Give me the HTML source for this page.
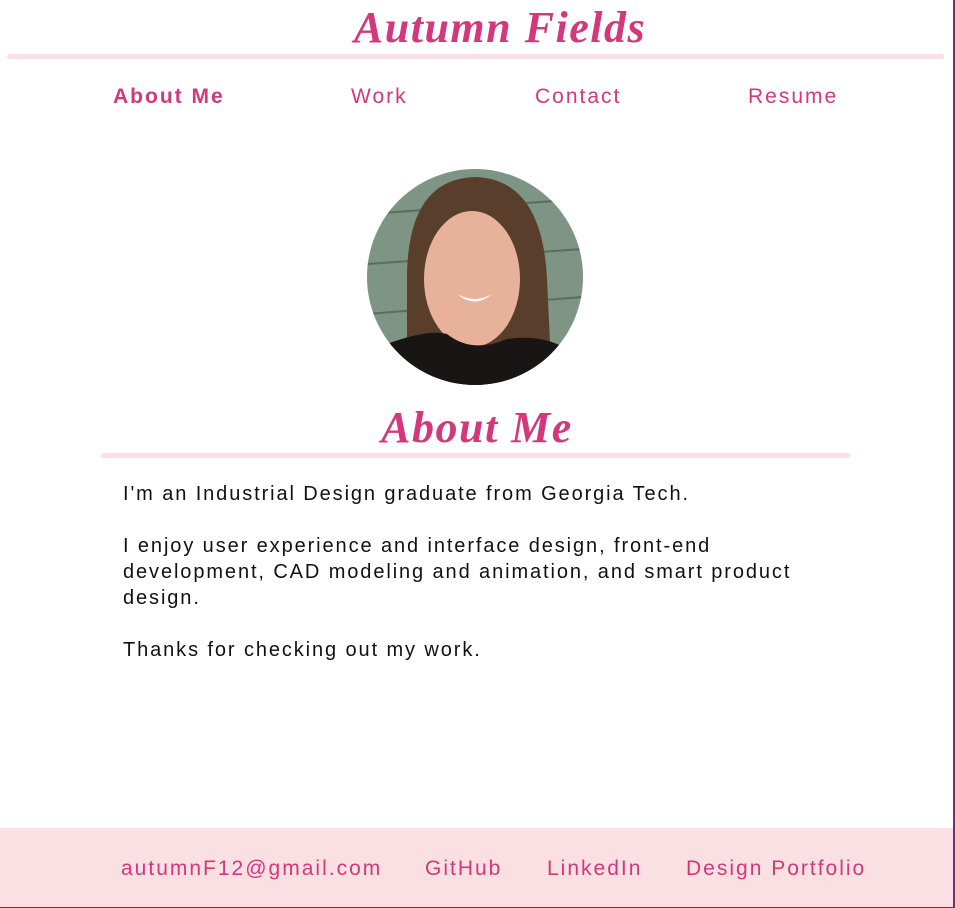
<!DOCTYPE html>
<html><head><meta charset="utf-8"><style>
body{margin:0;width:955px;height:908px;position:relative;background:#fff;font-family:"Liberation Sans",sans-serif;overflow:hidden}
.edge{position:absolute;right:0;top:0;width:2px;height:908px;background:#7a2a7a}
.edgeb{position:absolute;left:0;bottom:0;width:955px;height:1px;background:#7a2a7a}
.title{position:absolute;top:2px;left:0;width:1000px;text-align:center;font:italic bold 44px "Liberation Serif",serif;color:#d4387a;letter-spacing:1.5px}
.line{position:absolute;height:5px;background:#fae0e3;border-radius:3px}
.nav{position:absolute;top:85px;font-size:21px;color:#d4387a;letter-spacing:2px}
.t{position:absolute;left:123px;font-size:20px;color:#111;line-height:26px;width:720px;letter-spacing:1.9px}
.foot{position:absolute;left:0;top:828px;width:955px;height:80px;background:#fae0e3}
.f{position:absolute;top:857px;font-size:21px;color:#d4387a;letter-spacing:2px}
</style></head><body>
<div class="title">Autumn Fields</div>
<div class="line" style="left:7px;top:54px;width:937px"></div>
<div class="nav" style="left:113px;font-weight:bold">About Me</div>
<div class="nav" style="left:351px">Work</div>
<div class="nav" style="left:535px">Contact</div>
<div class="nav" style="left:748px">Resume</div>
<svg style="position:absolute;left:367px;top:169px" width="216" height="216" viewBox="0 0 216 216">
<defs><clipPath id="c"><circle cx="108" cy="108" r="108"/></clipPath></defs>
<g clip-path="url(#c)">
<rect width="216" height="216" fill="#7e9485"/>
<g stroke="#5a6d60" stroke-width="2"><line x1="0" y1="45" x2="216" y2="30"/><line x1="0" y1="95" x2="216" y2="80"/><line x1="0" y1="145" x2="216" y2="128"/></g>
<path d="M40 216 L40 110 Q40 10 108 8 Q175 10 180 110 L185 216Z" fill="#5a3e2c"/>
<ellipse cx="105" cy="110" rx="48" ry="68" fill="#e8b29a"/>
<path d="M60 60 Q105 0 150 50 L150 40 Q105 5 60 40Z" fill="#5a3e2c"/>
<path d="M0 216 L20 175 Q60 160 80 165 Q105 185 140 170 Q175 165 200 180 L216 216Z" fill="#1a1515"/>
<path d="M90 125 Q108 140 125 125 Q108 135 90 125Z" fill="#fff"/>
</g></svg>
<div class="title" style="top:402px;left:-23px">About Me</div>
<div class="line" style="left:101px;top:453px;width:749px"></div>
<div class="t" style="top:481px">I'm an Industrial Design graduate from Georgia Tech.</div>
<div class="t" style="top:533px">I enjoy user experience and interface design, front-end development, CAD modeling and animation, and smart product design.</div>
<div class="t" style="top:637px">Thanks for checking out my work.</div>
<div class="foot"></div>
<div class="f" style="left:121px">autumnF12@gmail.com</div>
<div class="f" style="left:425px">GitHub</div>
<div class="f" style="left:547px">LinkedIn</div>
<div class="f" style="left:686px">Design Portfolio</div>
<div class="edge"></div><div class="edgeb"></div>
</body></html>
